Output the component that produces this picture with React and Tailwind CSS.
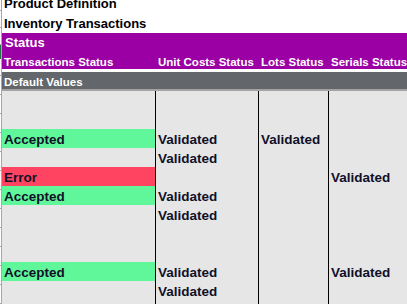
import React from 'react';

// Sheet rows below the header band
const rows = [
  {},
  {},
  { tx: 'Accepted', unit: 'Validated', lots: 'Validated' },
  { unit: 'Validated' },
  { tx: 'Error', serials: 'Validated' },
  { tx: 'Accepted', unit: 'Validated' },
  { unit: 'Validated' },
  {},
  {},
  { tx: 'Accepted', unit: 'Validated', serials: 'Validated' },
  { unit: 'Validated' },
  {},
];

const txBg = (v) => (v === 'Accepted' ? 'bg-[#60f79a]' : v === 'Error' ? 'bg-[#ff4462]' : '');

const cols = 'grid grid-cols-[153px_103px_70px_1fr]';

function Cell({ value, className = '' }) {
  return (
    <div className={`h-[19px] flex items-end pb-[2px] pl-[2px] overflow-hidden whitespace-nowrap ${className}`}>
      {value && <span className="leading-none">{value}</span>}
    </div>
  );
}

export default function App() {
  return (
    <div className="w-[407px] h-[304px] overflow-hidden bg-white flex font-['Liberation_Sans',Arial,sans-serif] font-bold">
      {/* left gridline strip */}
      <div className="w-[2px] shrink-0 flex flex-col border-r border-[#a8a8a8]">
        <div className="h-[13px] border-b border-[#a8a8a8]" />
        <div className="h-[20px] border-b border-[#a8a8a8]" />
        <div className="h-[19px] border-b border-[#a8a8a8]" />
        <div className="h-[17px] bg-[#217346]" />
        <div className="h-[20px] border-b border-[#a8a8a8]" />
        {rows.map((_, i) => (
          <div key={i} className="h-[19px] shrink-0 border-b border-[#a8a8a8]" />
        ))}
      </div>

      <div className="flex-1 flex flex-col min-w-0">
        <div className="h-[13px] shrink-0 flex items-end pb-[3px] pl-[2px] text-[13px] text-black">
          <span className="leading-none">Product Definition</span>
        </div>
        <div className="h-[20px] shrink-0 flex items-end pb-[3px] pl-[2px] text-[13px] text-black">
          <span className="leading-none">Inventory Transactions</span>
        </div>
        <div className="h-[19px] shrink-0 flex items-end pb-[3px] pl-[3px] text-[13px] text-white bg-[#9a00a3]">
          <span className="leading-none">Status</span>
        </div>
        <div className={`${cols} h-[17px] shrink-0 bg-[#9a00a3] text-white text-[11.5px]`}>
          {['Transactions Status', 'Unit Costs Status', 'Lots Status', 'Serials Status'].map((h, i) => (
            <div key={h} className={`flex items-end pb-[1px] ${i === 0 ? 'pl-[2px]' : 'pl-[3px]'} whitespace-nowrap overflow-hidden`}>
              <span className="leading-none">{h}</span>
            </div>
          ))}
        </div>
        <div className="h-[3px] shrink-0" />
        <div className="h-[17px] shrink-0 flex items-end pb-[1px] pl-[2px] bg-[#63676b] text-white text-[11.5px]">
          <span className="leading-none">Default Values</span>
        </div>
        <div className="h-[2px] shrink-0 bg-[#a3a3a3]" />

        <div className="flex flex-col bg-[#e6e6e6] text-[13.5px] text-[#101028]">
          {rows.map((r, i) => (
            <div key={i} className={`${cols} shrink-0`}>
              <Cell value={r.tx} className={txBg(r.tx)} />
              <Cell value={r.unit} className="border-l border-black" />
              <Cell value={r.lots} className="border-l border-black" />
              <Cell value={r.serials} className="border-l border-black" />
            </div>
          ))}
        </div>
      </div>
    </div>
  );
}
